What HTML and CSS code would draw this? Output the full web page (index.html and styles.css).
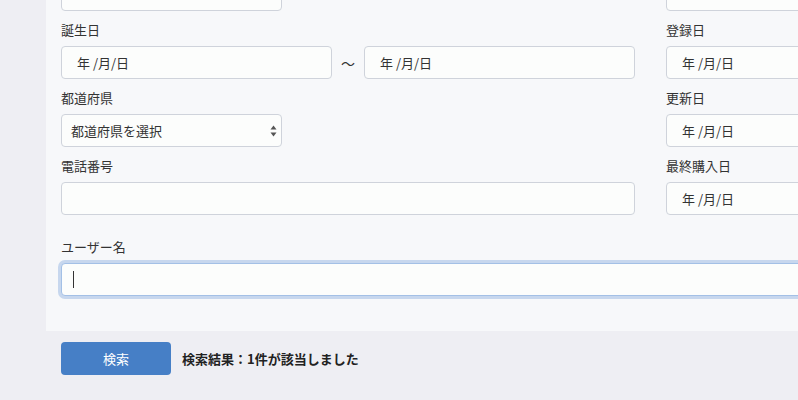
FILE: index.html
```html
<!DOCTYPE html>
<html lang="ja">
<head>
    <meta charset="UTF-8">
    <meta name="viewport" content="width=device-width, initial-scale=1.0">
    <title>会員検索</title>
    <link rel="stylesheet" href="styles.css">
</head>
<body>
    <div class="panel">
        <div class="form">
            <div class="column">
                <div class="control short"></div>
                <div class="field">
                    <label>誕生日</label>
                    <div class="range">
                        <div class="control date">年 /月/日</div>
                        <span class="tilde">〜</span>
                        <div class="control date">年 /月/日</div>
                    </div>
                </div>
                <div class="field">
                    <label>都道府県</label>
                    <div class="control short select">
                        <span>都道府県を選択</span>
                        <svg width="7" height="12" viewBox="0 0 7 12">
                            <path d="M3.5 0.5 L6.5 4.5 L0.5 4.5 Z" fill="#555"/>
                            <path d="M3.5 11.5 L6.5 7.5 L0.5 7.5 Z" fill="#555"/>
                        </svg>
                    </div>
                </div>
                <div class="field">
                    <label>電話番号</label>
                    <div class="control"></div>
                </div>
            </div>
            <div class="column">
                <div class="control"></div>
                <div class="field">
                    <label>登録日</label>
                    <div class="control date">年 /月/日</div>
                </div>
                <div class="field">
                    <label>更新日</label>
                    <div class="control date">年 /月/日</div>
                </div>
                <div class="field">
                    <label>最終購入日</label>
                    <div class="control date">年 /月/日</div>
                </div>
            </div>
        </div>
        <div class="field user">
            <label>ユーザー名</label>
            <div class="control focused"><span class="caret"></span></div>
        </div>
    </div>

    <div class="actions">
        <button class="search-btn">検索</button>
        <span class="result">検索結果：1件が該当しました</span>
    </div>
</body>
</html>
```

FILE: styles.css
```css
body {
    font-family: "Noto Sans CJK JP", "Noto Sans", sans-serif;
    font-size: 13px;
    color: #333;
    background-color: #eeeef3;
    margin: 0;
    overflow: hidden;
}
.panel {
    width: 876px;
    margin: -37px 0 0 46px;
    padding: 15px 15px 35px;
    background: #f7f8fa;
}
.form {
    display: grid;
    grid-template-columns: 574px 271px;
    column-gap: 31px;
}
.column {
    display: flex;
    flex-direction: column;
    gap: 11px;
}
.field {
    display: flex;
    flex-direction: column;
}
.field label {
    line-height: 16px;
    margin-bottom: 8px;
}
.control {
    box-sizing: border-box;
    height: 33px;
    flex-shrink: 0;
    background: #fcfdfc;
    border: 1px solid #cfd3db;
    border-radius: 4px;
    display: flex;
    align-items: center;
    padding: 0 9px;
}
.short {
    width: 221px;
}
.date {
    padding-left: 15px;
}
.range {
    display: flex;
    align-items: center;
}
.range .date {
    flex: 1;
}
.tilde {
    width: 32px;
    text-align: center;
    font-size: 14px;
}
.select {
    justify-content: space-between;
    padding-right: 4px;
}
.user {
    margin-top: 24px;
}
.focused {
    border-color: #a3c0e6;
    box-shadow: 0 0 0 3px rgba(140, 175, 225, 0.45);
    padding-left: 11px;
}
.caret {
    width: 1px;
    height: 17px;
    background: #333;
}
.actions {
    display: flex;
    align-items: center;
    gap: 11px;
    padding: 11px 0 0 61px;
}
.search-btn {
    width: 110px;
    height: 33px;
    background: #467fc6;
    color: white;
    border: none;
    border-radius: 4px;
    font-family: inherit;
    font-size: 13px;
    padding: 0;
}
.result {
    font-weight: bold;
    color: #222;
}
```
